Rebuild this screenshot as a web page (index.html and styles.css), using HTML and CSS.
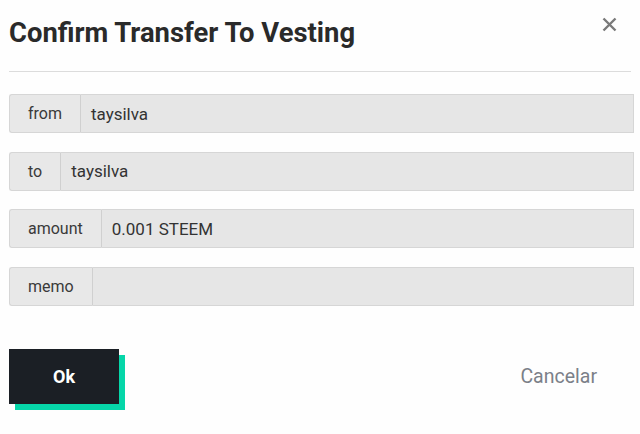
FILE: index.html
```html
<!DOCTYPE html>
<html>
<head>
<meta charset="utf-8">
<link rel="stylesheet" href="styles.css">
</head>
<body>
<div class="dialog">
  <div class="header">
    <h1 class="title">Confirm Transfer To Vesting</h1>
    <svg class="close" width="15" height="15" viewBox="0 0 15 15"><path d="M1.5 1.5 L13.5 13.5 M13.5 1.5 L1.5 13.5" stroke="#7a7a7a" stroke-width="2.4" stroke-linecap="butt" fill="none"/></svg>
  </div>
  <div class="sep"></div>
  <div class="rows">
    <div class="row"><span class="label">from</span><span class="value">taysilva</span></div>
    <div class="row"><span class="label">to</span><span class="value">taysilva</span></div>
    <div class="row"><span class="label">amount</span><span class="value">0.001 STEEM</span></div>
    <div class="row"><span class="label">memo</span><span class="value"></span></div>
  </div>
  <div class="actions">
    <div class="ok-wrap"><div class="ok">Ok</div></div>
    <div class="cancel">Cancelar</div>
  </div>
</div>
</body>
</html>
```
FILE: styles.css
```css
* { box-sizing: border-box; }
html, body { margin: 0; padding: 0; background: #fefefe; }
body { font-family: Roboto, "Noto Sans", sans-serif; color: #333; }
.dialog { padding: 0 6px 24px 9px; }
.header { display: flex; justify-content: space-between; align-items: flex-start; height: 71px; }
.title { margin: 0; padding-top: 16px; font-size: 27.4px; font-weight: 700; color: #2a2a2a; line-height: 34px; letter-spacing: 0; }
.close { margin-top: 17px; margin-right: 17px; }
.sep { height: 1px; background: #dcdcdc; margin-right: 3px; }
.rows { display: flex; flex-direction: column; gap: 18.7px; padding-top: 22px; }
.row { display: flex; height: 39px; }
.label { display: flex; align-items: center; padding: 0 18px; background: #e8e8e8; border: 1px solid #d6d6d6; border-right: 1px solid #d0d0d0; border-radius: 3px 0 0 3px; font-size: 16px; color: #3a3a3a; }
.value { flex: 1; display: flex; align-items: center; padding: 0 10px; background: #e6e6e6; border: 1px solid #d6d6d6; border-left: none; font-size: 17px; color: #333; }
.actions { display: flex; justify-content: space-between; align-items: flex-start; padding-top: 43px; padding-right: 37px; }
.ok-wrap { padding: 0 6px 6px 0; background: linear-gradient(#06d6a9, #06d6a9) 6px 6px / 110px 55px no-repeat; }
.ok { width: 110px; height: 55px; display: flex; align-items: center; justify-content: center; background: #1b1f25; color: #fff; font-weight: 700; font-size: 18px; }
.cancel { margin-top: 16px; font-size: 19.5px; color: #7b8088; }
```
